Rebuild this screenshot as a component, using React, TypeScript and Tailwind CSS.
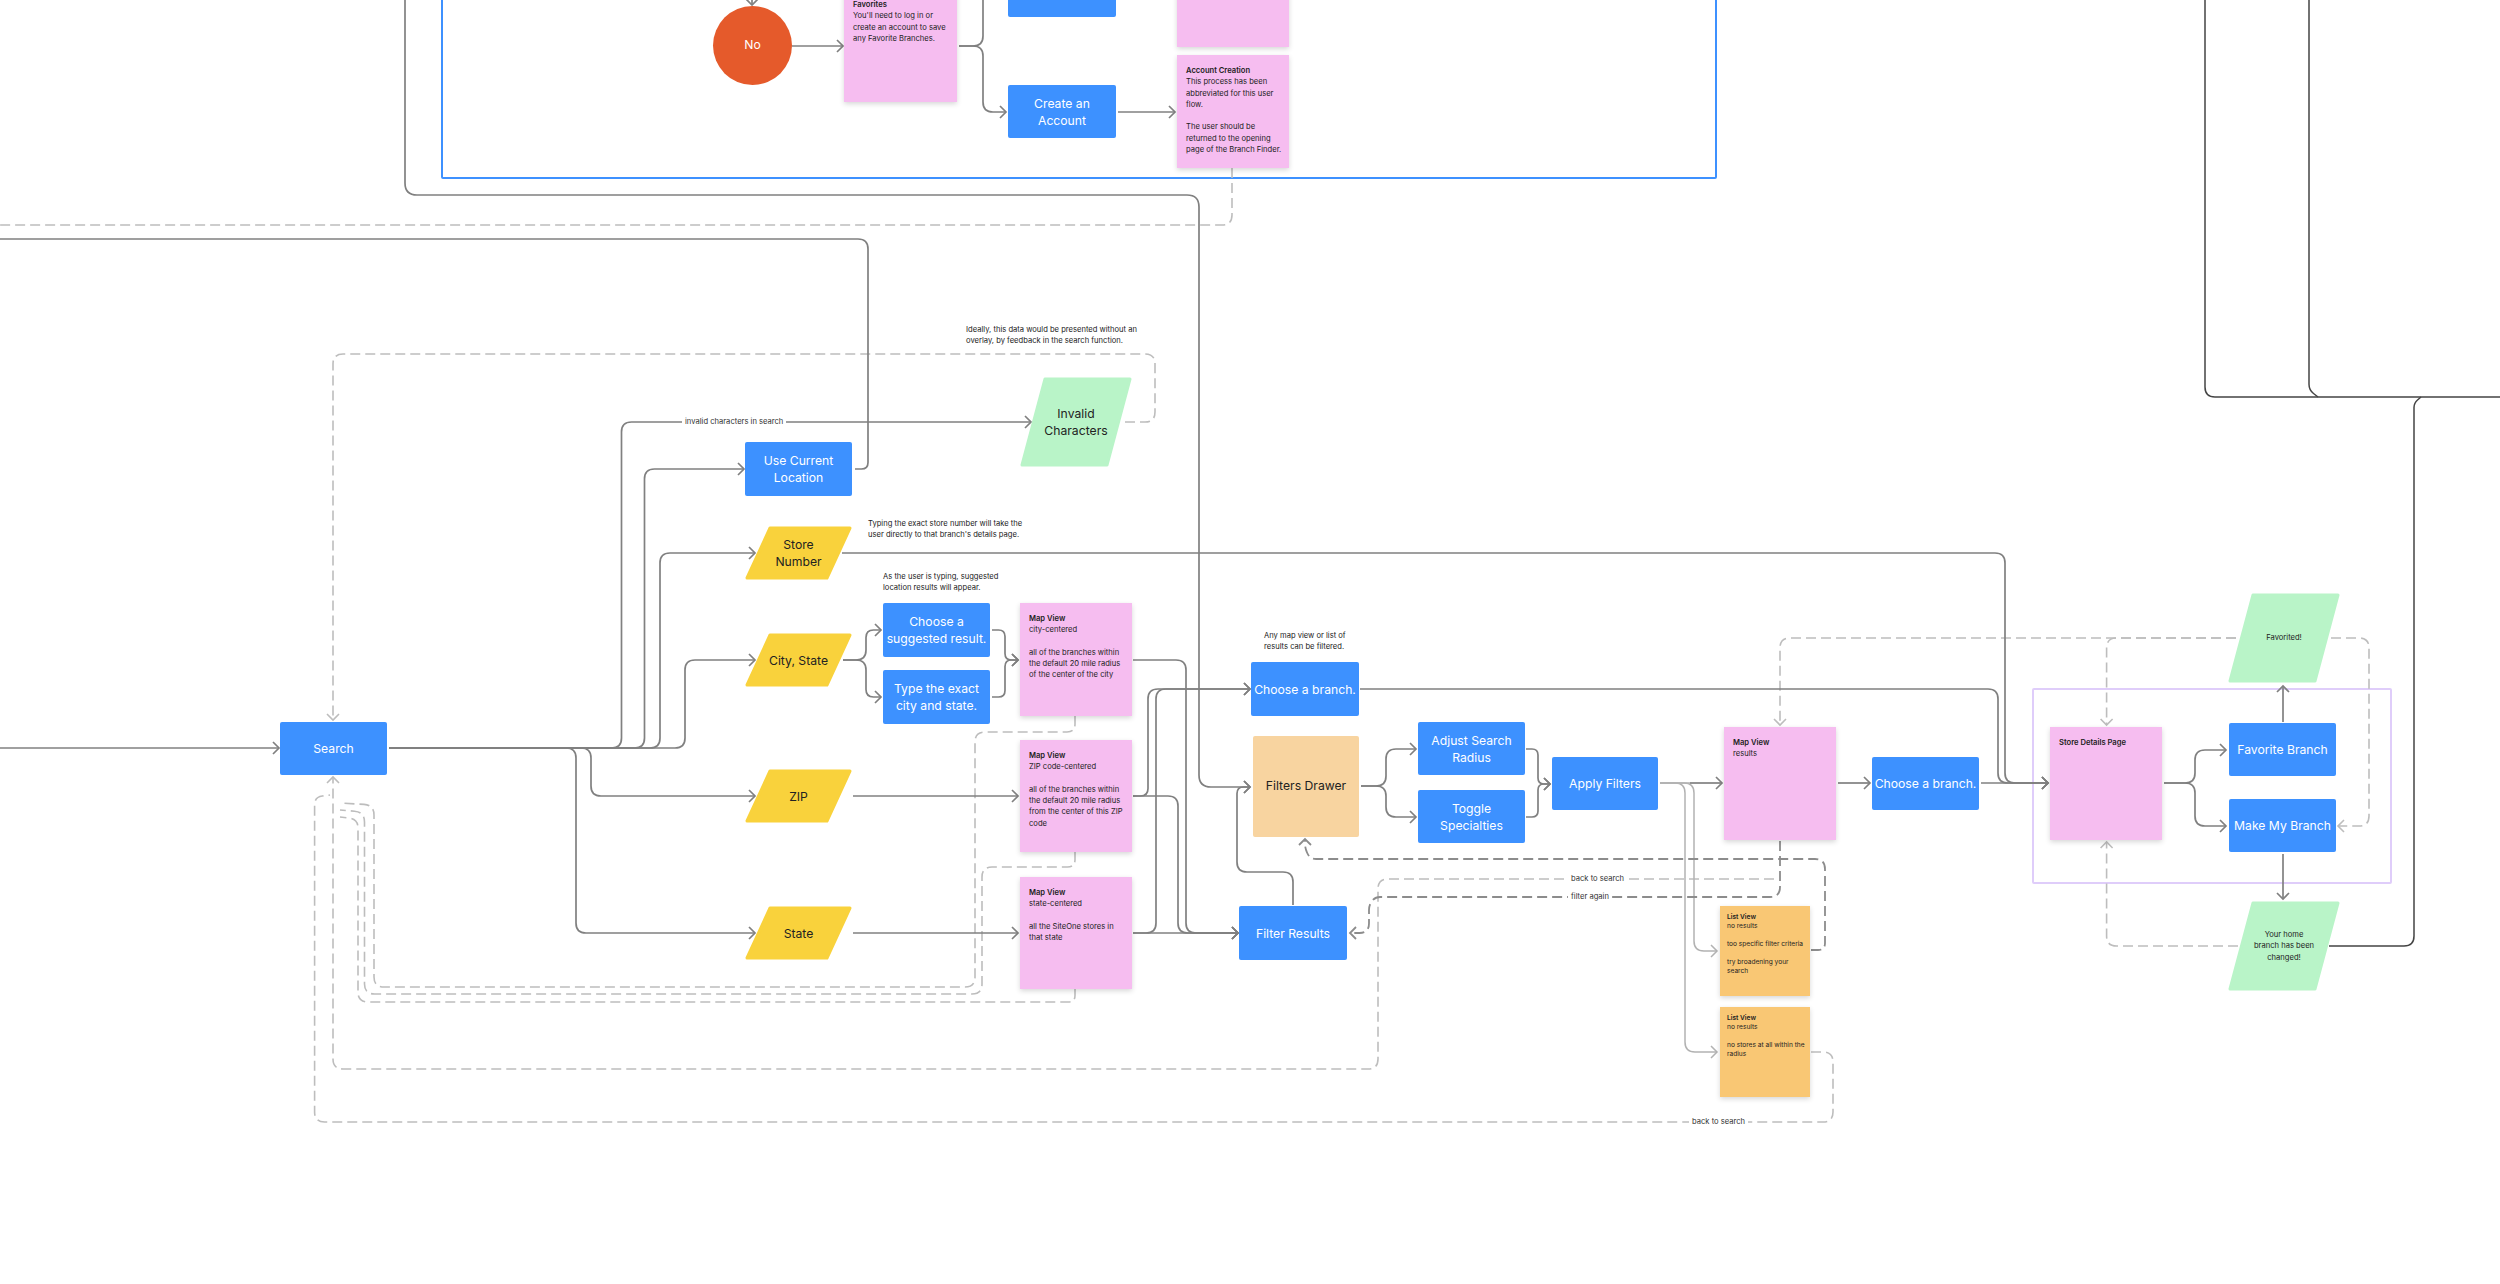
import type { ReactNode } from 'react';

type Pt = [number, number];
type Edge = { pts: Pt[]; arrow?: boolean; r?: number };

const routePath = (pts: Pt[], r = 10) => {
  let d = `M${pts[0][0]} ${pts[0][1]}`;
  for (let i = 1; i < pts.length - 1; i++) {
    const [px, py] = pts[i - 1];
    const [x, y] = pts[i];
    const [nx, ny] = pts[i + 1];
    const l1 = Math.hypot(x - px, y - py);
    const l2 = Math.hypot(nx - x, ny - y);
    const k = Math.min(r, l1 / 2, l2 / 2);
    d += ` L${x - ((x - px) / l1) * k} ${y - ((y - py) / l1) * k}`;
    d += ` Q${x} ${y} ${x + ((nx - x) / l2) * k} ${y + ((ny - y) / l2) * k}`;
  }
  const last = pts[pts.length - 1];
  return `${d} L${last[0]} ${last[1]}`;
};

const headPath = (pts: Pt[]) => {
  const [tx, ty] = pts[pts.length - 1];
  const [px, py] = pts[pts.length - 2];
  const l = Math.hypot(tx - px, ty - py);
  const ux = (tx - px) / l;
  const uy = (ty - py) / l;
  const bx = tx - ux * 6;
  const by = ty - uy * 6;
  return `M${bx - uy * 6} ${by + ux * 6} L${tx} ${ty} L${bx + uy * 6} ${by - ux * 6}`;
};

const Edges = ({ items, color, width, dash }: { items: Edge[]; color: string; width: number; dash?: string }) => (
  <g fill="none" stroke={color} strokeWidth={width}>
    {items.map((e, i) => (
      <g key={i}>
        <path d={routePath(e.pts, e.r)} strokeDasharray={dash} />
        {e.arrow !== false && <path d={headPath(e.pts)} />}
      </g>
    ))}
  </g>
);

const solid: Edge[] = [
  { pts: [[0, 748], [279, 748]] },
  { pts: [[389, 748], [685, 748], [685, 660], [755, 660]] },
  { pts: [[389, 748], [660, 748], [660, 553], [755, 553]] },
  { pts: [[389, 748], [644.5, 748], [644.5, 469], [744, 469]] },
  { pts: [[389, 748], [621.5, 748], [621.5, 422], [1031, 422]] },
  { pts: [[389, 748], [576, 748], [576, 933], [755, 933]] },
  { pts: [[389, 748], [591, 748], [591, 796], [755, 796]] },
  { pts: [[855, 469], [868, 469], [868, 239], [0, 239]], arrow: false },
  { pts: [[842, 553], [2005, 553], [2005, 783], [2048, 783]] },
  { pts: [[405, 0], [405, 195], [1199, 195], [1199, 787], [1250, 787]], r: 12 },
  { pts: [[1360, 689], [1998, 689], [1998, 783], [2048, 783]] },
  { pts: [[843, 660], [866, 660], [866, 630], [881, 630]] },
  { pts: [[843, 660], [866, 660], [866, 697], [881, 697]] },
  { pts: [[992, 630], [1005, 630], [1005, 660], [1018, 660]] },
  { pts: [[992, 697], [1005, 697], [1005, 660], [1018, 660]] },
  { pts: [[1133, 660], [1186, 660], [1186, 933], [1238, 933]] },
  { pts: [[1133, 796], [1178, 796], [1178, 933], [1238, 933]] },
  { pts: [[1133, 933], [1238, 933]] },
  { pts: [[1133, 796], [1148, 796], [1148, 689], [1250, 689]] },
  { pts: [[1133, 933], [1156, 933], [1156, 689], [1250, 689]] },
  { pts: [[853, 796], [1018, 796]] },
  { pts: [[853, 933], [1018, 933]] },
  { pts: [[1293, 905], [1293, 872], [1237, 872], [1237, 787], [1250, 787]] },
  { pts: [[1361, 786], [1386, 786], [1386, 749], [1416, 749]] },
  { pts: [[1361, 786], [1386, 786], [1386, 817], [1416, 817]] },
  { pts: [[1526, 749], [1538, 749], [1538, 784], [1550, 784]] },
  { pts: [[1526, 817], [1538, 817], [1538, 784], [1550, 784]] },
  { pts: [[1690, 783], [1722, 783]] },
  { pts: [[1838, 783], [1870, 783]] },
  { pts: [[1981, 783], [2048, 783]] },
  { pts: [[2164, 783], [2195, 783], [2195, 750], [2226, 750]] },
  { pts: [[2164, 783], [2195, 783], [2195, 826], [2226, 826]] },
  { pts: [[2283, 722], [2283, 686]] },
  { pts: [[2283, 854], [2283, 899]] },
  { pts: [[792, 46], [843, 46]] },
  { pts: [[959, 46], [983, 46], [983, 0]], arrow: false },
  { pts: [[959, 46], [983, 46], [983, 112], [1006, 112]] },
  { pts: [[1118, 112], [1175, 112]] },
  { pts: [[752, 0], [752, 5]], arrow: true },
];

const light: Edge[] = [
  { pts: [[1660, 783], [1690, 783]], arrow: false },
  { pts: [[1660, 783], [1685, 783], [1685, 1052], [1717, 1052]] },
  { pts: [[1660, 783], [1694, 783], [1694, 951], [1717, 951]] },
];

const dark: Edge[] = [
  { pts: [[2205, 0], [2205, 397], [2500, 397]], arrow: false },
  { pts: [[2309, 0], [2309, 390], [2318, 397]], arrow: false },
  { pts: [[2329, 946], [2414, 946], [2414, 403], [2421, 397]], arrow: false },
];

const dashed: Edge[] = [
  { pts: [[1232, 168], [1232, 225], [0, 225]], arrow: false },
  { pts: [[1125, 422], [1155, 422], [1155, 354], [333, 354], [333, 720]] },
  { pts: [[1075, 716], [1075, 732], [975, 732], [975, 987], [374, 987], [374, 805], [340, 803]], arrow: false },
  { pts: [[1075, 852], [1075, 867], [982, 867], [982, 994], [364.5, 994], [364.5, 812], [340, 810]], arrow: false },
  { pts: [[1075, 989], [1075, 1002], [358, 1002], [358, 819], [340, 817]], arrow: false },
  { pts: [[1774, 879], [1378, 879], [1378, 1069], [333, 1069], [333, 777]] },
  { pts: [[1811, 1052], [1833, 1052], [1833, 1122], [314.6, 1122], [314.6, 797], [330, 795]], arrow: false },
  { pts: [[2236, 638], [1780, 638], [1780, 725]] },
  { pts: [[2236, 638], [2106.6, 638], [2106.6, 725]] },
  { pts: [[2331, 638], [2369, 638], [2369, 826], [2338, 826]] },
  { pts: [[2238, 946], [2106.6, 946], [2106.6, 842]] },
];

const darkDashed: Edge[] = [
  { pts: [[1780, 841], [1780, 897], [1375, 897], [1369, 905], [1369, 933], [1350, 933]] },
  { pts: [[1811, 950], [1825, 950], [1825, 859], [1310, 859], [1305, 848], [1305, 839]] },
];

const Box = ({ className, children }: { className: string; children: ReactNode }) => (
  <div className={`absolute flex items-center justify-center rounded-[2px] bg-[#3d91ff] text-center text-[12.2px] leading-[17px] text-white ${className}`}>
    {children}
  </div>
);

const Note = ({ className, title, children }: { className: string; title: string; children?: ReactNode }) => (
  <div className={`absolute bg-[#f6bdf0] pl-[9px] pt-[10px] text-[7.6px] leading-[11.25px] text-[#222] shadow-[0_2px_5px_rgba(0,0,0,0.16)] ${className}`}>
    <div className="font-semibold">{title}</div>
    {children}
  </div>
);

const ListNote = ({ className, children }: { className: string; children: ReactNode }) => (
  <div className={`absolute bg-[#f9c774] pl-[7px] pt-[7px] text-[6.6px] leading-[9px] text-[#222] shadow-[0_2px_5px_rgba(0,0,0,0.16)] ${className}`}>
    <div className="font-semibold">List View</div>
    {children}
  </div>
);

const Para = ({ className, fill, offset, width, height, children }: { className: string; fill: string; offset: number; width: number; height: number; children: ReactNode }) => (
  <div className={`absolute flex items-center justify-center text-center text-[#222] ${className}`}>
    <svg className="absolute inset-0" width={width} height={height}>
      <path
        d={`M${offset + 2} 2 L${width - 2} 2 L${width - offset - 2} ${height - 2} L2 ${height - 2} Z`}
        fill={fill}
        stroke={fill}
        strokeWidth={3}
        strokeLinejoin="round"
      />
    </svg>
    <span className="relative">{children}</span>
  </div>
);

const Caption = ({ className, children }: { className: string; children: ReactNode }) => (
  <div className={`absolute whitespace-nowrap text-[7.6px] leading-[11.25px] text-[#222] ${className}`}>{children}</div>
);

const EdgeLabel = ({ className, children }: { className: string; children: ReactNode }) => (
  <div className={`absolute whitespace-nowrap bg-white px-[3px] text-[7.6px] leading-[10px] text-[#333] ${className}`}>{children}</div>
);

export default function App() {
  return (
    <div className="relative h-[1284px] w-[2500px] overflow-hidden bg-white font-['Inter',sans-serif]">
      <div className="absolute left-[441px] top-[-20px] h-[199px] w-[1276px] rounded-[2px] border-2 border-[#3d91ff]" />
      <div className="absolute left-[2032px] top-[688px] h-[196px] w-[360px] rounded-[2px] border-2 border-[#dfcdfa]" />

      <svg className="absolute inset-0" width={2500} height={1284}>
        <Edges items={dark} color="#444444" width={1.5} />
        <Edges items={dashed} color="#bdbdbd" width={1.6} dash="10 5" />
        <Edges items={light} color="#b2b2b2" width={1.5} />
        <Edges items={solid} color="#808080" width={1.7} />
        <Edges items={darkDashed} color="#8c8c8c" width={1.8} dash="10 5" />
      </svg>

      <div className="absolute left-[713px] top-[6px] flex h-[79px] w-[79px] items-center justify-center rounded-full bg-[#e55a2b] text-[12.2px] text-white">No</div>

      <Note className="left-[844px] top-[-11px] h-[113px] w-[113px]" title="Favorites">
        You'll need to log in or
        <br />
        create an account to save
        <br />
        any Favorite Branches.
      </Note>
      <Box className="left-[1008px] top-[-20px] h-[37px] w-[108px]"> </Box>
      <Note className="left-[1177px] top-[-20px] h-[67px] w-[112px]" title=""> </Note>
      <Box className="left-[1008px] top-[85px] h-[53px] w-[108px]">
        Create an
        <br />
        Account
      </Box>
      <Note className="left-[1177px] top-[55px] h-[113px] w-[112px]" title="Account Creation">
        This process has been
        <br />
        abbreviated for this user
        <br />
        flow.
        <br />
        <br />
        The user should be
        <br />
        returned to the opening
        <br />
        page of the Branch Finder.
      </Note>

      <Box className="left-[280px] top-[722px] h-[53px] w-[107px]">Search</Box>
      <Box className="left-[745px] top-[442px] h-[54px] w-[107px]">
        Use Current
        <br />
        Location
      </Box>
      <Box className="left-[883px] top-[603px] h-[54px] w-[107px]">
        Choose a
        <br />
        suggested result.
      </Box>
      <Box className="left-[883px] top-[670px] h-[54px] w-[107px]">
        Type the exact
        <br />
        city and state.
      </Box>
      <Box className="left-[1251px] top-[662px] h-[54px] w-[108px]">Choose a branch.</Box>
      <Box className="left-[1239px] top-[906px] h-[54px] w-[108px]">Filter Results</Box>
      <Box className="left-[1418px] top-[722px] h-[53px] w-[107px]">
        Adjust Search
        <br />
        Radius
      </Box>
      <Box className="left-[1418px] top-[790px] h-[53px] w-[107px]">
        Toggle
        <br />
        Specialties
      </Box>
      <Box className="left-[1552px] top-[757px] h-[53px] w-[106px]">Apply Filters</Box>
      <Box className="left-[1872px] top-[757px] h-[53px] w-[107px]">Choose a branch.</Box>
      <Box className="left-[2229px] top-[723px] h-[53px] w-[107px]">Favorite Branch</Box>
      <Box className="left-[2229px] top-[799px] h-[53px] w-[107px]">Make My Branch</Box>

      <div className="absolute left-[1253px] top-[736px] flex h-[101px] w-[106px] items-center justify-center rounded-[2px] bg-[#f8d4a0] text-[12.2px] text-[#222]">Filters Drawer</div>

      <Para className="left-[745px] top-[526px] h-[54px] w-[107px] text-[12.2px] leading-[17px]" fill="#f9d23c" offset={23} width={107} height={54}>
        Store
        <br />
        Number
      </Para>
      <Para className="left-[745px] top-[633px] h-[54px] w-[107px] text-[12.2px] leading-[17px]" fill="#f9d23c" offset={23} width={107} height={54}>City, State</Para>
      <Para className="left-[745px] top-[769px] h-[54px] w-[107px] text-[12.2px] leading-[17px]" fill="#f9d23c" offset={23} width={107} height={54}>ZIP</Para>
      <Para className="left-[745px] top-[906px] h-[54px] w-[107px] text-[12.2px] leading-[17px]" fill="#f9d23c" offset={23} width={107} height={54}>State</Para>
      <Para className="left-[1020px] top-[377px] h-[90px] w-[112px] text-[12.2px] leading-[17px]" fill="#b9f4c8" offset={23} width={112} height={90}>
        Invalid
        <br />
        Characters
      </Para>
      <Para className="left-[2228px] top-[593px] h-[90px] w-[112px] text-[7.6px] leading-[11.25px]" fill="#b9f4c8" offset={23} width={112} height={90}>Favorited!</Para>
      <Para className="left-[2228px] top-[901px] h-[90px] w-[112px] text-[7.6px] leading-[11.25px]" fill="#b9f4c8" offset={23} width={112} height={90}>
        Your home
        <br />
        branch has been
        <br />
        changed!
      </Para>

      <Note className="left-[1020px] top-[603px] h-[113px] w-[112px]" title="Map View">
        city-centered
        <br />
        <br />
        all of the branches within
        <br />
        the default 20 mile radius
        <br />
        of the center of the city
      </Note>
      <Note className="left-[1020px] top-[740px] h-[112px] w-[112px]" title="Map View">
        ZIP code-centered
        <br />
        <br />
        all of the branches within
        <br />
        the default 20 mile radius
        <br />
        from the center of this ZIP
        <br />
        code
      </Note>
      <Note className="left-[1020px] top-[877px] h-[112px] w-[112px]" title="Map View">
        state-centered
        <br />
        <br />
        all the SiteOne stores in
        <br />
        that state
      </Note>
      <Note className="left-[1724px] top-[727px] h-[113px] w-[112px]" title="Map View">results</Note>
      <Note className="left-[2050px] top-[727px] h-[113px] w-[112px]" title="Store Details Page" />

      <ListNote className="left-[1720px] top-[906px] h-[90px] w-[90px]">
        no results
        <br />
        <br />
        too specific filter criteria
        <br />
        <br />
        try broadening your
        <br />
        search
      </ListNote>
      <ListNote className="left-[1720px] top-[1007px] h-[90px] w-[90px]">
        no results
        <br />
        <br />
        no stores at all within the
        <br />
        radius
      </ListNote>

      <Caption className="left-[966px] top-[324px]">
        Ideally, this data would be presented without an
        <br />
        overlay, by feedback in the search function.
      </Caption>
      <Caption className="left-[868px] top-[518px]">
        Typing the exact store number will take the
        <br />
        user directly to that branch's details page.
      </Caption>
      <Caption className="left-[883px] top-[571px]">
        As the user is typing, suggested
        <br />
        location results will appear.
      </Caption>
      <Caption className="left-[1264px] top-[630px]">
        Any map view or list of
        <br />
        results can be filtered.
      </Caption>

      <EdgeLabel className="left-[682px] top-[417px]">invalid characters in search</EdgeLabel>
      <EdgeLabel className="left-[1568px] top-[874px]">back to search</EdgeLabel>
      <EdgeLabel className="left-[1568px] top-[892px]">filter again</EdgeLabel>
      <EdgeLabel className="left-[1689px] top-[1117px]">back to search</EdgeLabel>
    </div>
  );
}
